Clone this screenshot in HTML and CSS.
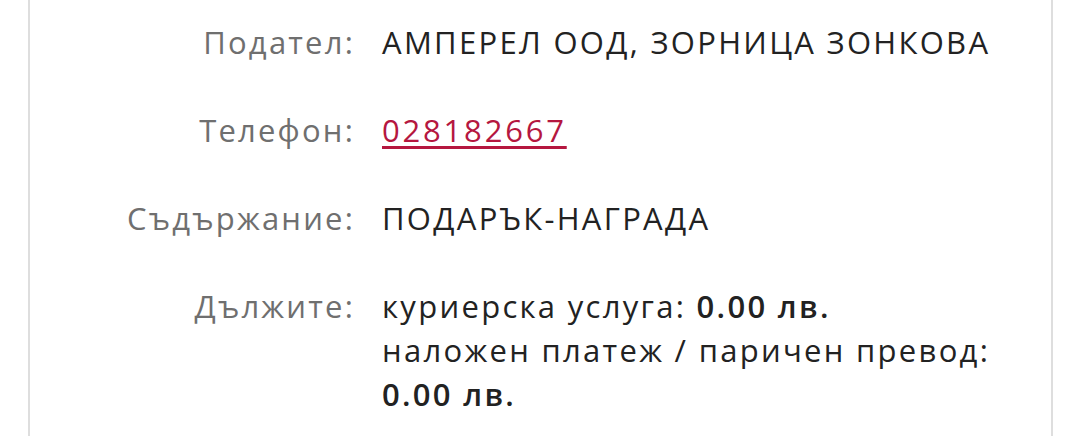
FILE: index.html
```html
<!DOCTYPE html>
<html lang="bg">
<head>
<meta charset="utf-8">
<link rel="stylesheet" href="styles.css">
</head>
<body>
<div class="panel">
  <dl class="info">
    <div class="row">
      <dt class="label">Подател:</dt>
      <dd class="value">АМПЕРЕЛ ООД, ЗОРНИЦА ЗОНКОВА</dd>
    </div>
    <div class="row">
      <dt class="label">Телефон:</dt>
      <dd class="value"><a class="phone" href="#">028182667</a></dd>
    </div>
    <div class="row">
      <dt class="label">Съдържание:</dt>
      <dd class="value">ПОДАРЪК-НАГРАДА</dd>
    </div>
    <div class="row">
      <dt class="label">Дължите:</dt>
      <dd class="value">
        <div>куриерска услуга: <b>0.00 лв.</b></div>
        <div>наложен платеж / паричен превод: <b>0.00 лв.</b></div>
      </dd>
    </div>
  </dl>
</div>
</body>
</html>
```
FILE: styles.css
```css
html, body {
  margin: 0;
  padding: 0;
  background: #fff;
  height: 100%;
}
body {
  font-family: "Open Sans", "Noto Sans", sans-serif;
  font-size: 31px;
  line-height: 44px;
  letter-spacing: 2.3px;
  color: #222;
}
.panel {
  margin-left: 28px;
  width: 1025px;
  min-height: 100%;
  box-sizing: border-box;
  border-left: 2px solid #dedede;
  border-right: 2px solid #dedede;
  padding-top: 20px;
}
.info {
  margin: 0;
}
.row {
  display: grid;
  grid-template-columns: 323px 1fr;
  column-gap: 29px;
  margin-bottom: 44px;
}
.label {
  text-align: right;
  color: #6f6f6f;
  letter-spacing: 2.2px;
  margin-right: -2px;
}
.value {
  margin: 0;
  padding-right: 30px;
}
.value b {
  font-weight: 600;
  white-space: nowrap;
}
.phone {
  color: #b5173f;
  letter-spacing: 2.8px;
  text-decoration: underline;
  text-decoration-thickness: 3px;
  text-underline-offset: 4px;
}
```
